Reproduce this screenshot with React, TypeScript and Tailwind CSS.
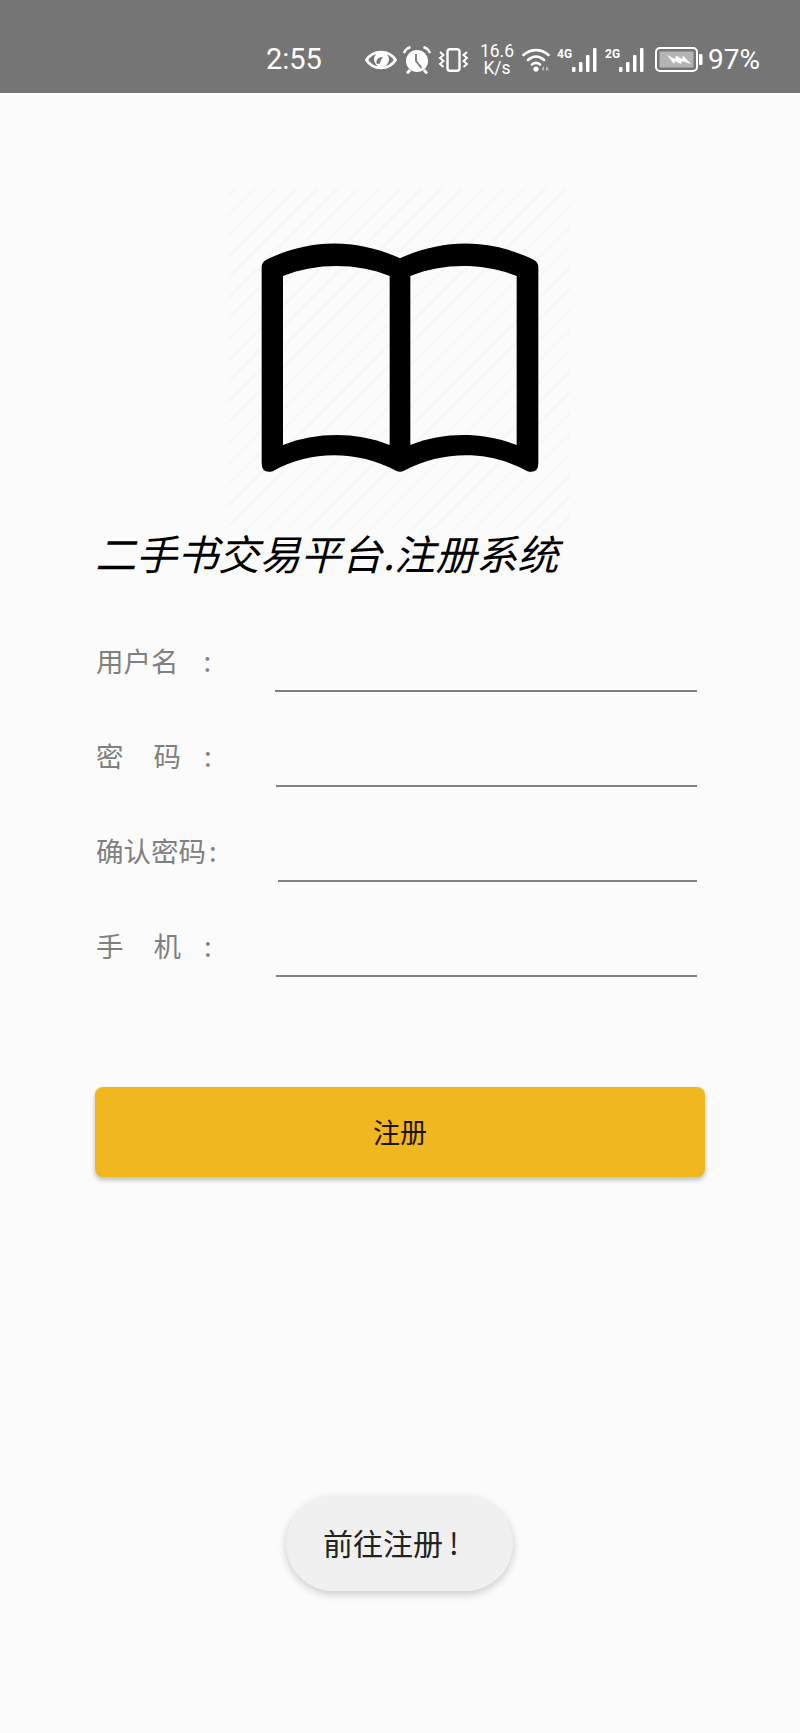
const rows = [
  { parts: [{ text: '用户名', gap: 0 }, { text: ':', gap: 25 }], labelWidth: 179 },
  { parts: [{ text: '密', gap: 0 }, { text: '码', gap: 30 }, { text: ':', gap: 23 }], labelWidth: 180 },
  { parts: [{ text: '确认密码', gap: 0 }, { text: ':', gap: 3 }], labelWidth: 182 },
  { parts: [{ text: '手', gap: 0 }, { text: '机', gap: 30 }, { text: ':', gap: 23 }], labelWidth: 180 },
];

function EyeIcon() {
  return (
    <svg width="32" height="24" viewBox="0 0 32 24" className="shrink-0">
      <path d="M1.500 12C8 1.500 24 1.500 30.500 12C24 22.500 8 22.500 1.500 12Z" fill="none" stroke="#fff" strokeWidth="2.800" strokeLinejoin="round" />
      <circle cx="16.500" cy="11.500" r="7.500" fill="#fff" />
      <path d="M11.500 15.500C11 11.500 14 8.500 18 9.500C16 11 15.500 13.500 14.500 16Z" fill="#757575" />
    </svg>
  );
}

function AlarmIcon() {
  return (
    <svg width="28" height="28" viewBox="0 0 28 28" className="shrink-0">
      <circle cx="14" cy="15" r="11" fill="#fff" />
      <path d="M13 8V15L18.500 22" fill="none" stroke="#757575" strokeWidth="1.800" />
      <path d="M1 7C2 4 4.500 2 7.500 1M27 7C26 4 23.500 2 20.500 1" fill="none" stroke="#fff" strokeWidth="2.400" />
      <path d="M4 27.500L7 24M24 27.500L21 24" fill="none" stroke="#fff" strokeWidth="2.800" />
    </svg>
  );
}

function VibrateIcon() {
  return (
    <svg width="31" height="24" viewBox="0 0 31 24" className="shrink-0">
      <rect x="9.500" y="1.200" width="12" height="21.600" rx="2.500" fill="none" stroke="#fff" strokeWidth="2.400" />
      <path d="M2 4L5.500 7L2 10L5.500 13L2 16L5.500 19M29 4L25.500 7L29 10L25.500 13L29 16L25.500 19" fill="none" stroke="#fff" strokeWidth="2" />
    </svg>
  );
}

function WifiIcon() {
  return (
    <svg width="30" height="25" viewBox="0 0 30 25" className="shrink-0">
      <path d="M1.500 8C9 1.500 19 1.500 26.500 8M6 13C11 8.500 17 8.500 22 13M10 17.500C12.500 15.500 15.500 15.500 18 17.500" fill="none" stroke="#fff" strokeWidth="2.600" strokeLinecap="round" />
      <circle cx="14" cy="22" r="2.600" fill="#fff" />
      <path d="M22 19V24L19.500 22ZM24 19V24L27 22Z" fill="#b8b8b8" />
    </svg>
  );
}

function SignalBars() {
  return (
    <svg width="26" height="24" viewBox="0 0 26 24" className="shrink-0">
      <rect x="0" y="19" width="3.500" height="5" rx="1" fill="#fff" />
      <rect x="7" y="14" width="3.500" height="10" rx="1" fill="#fff" />
      <rect x="14" y="7" width="3.500" height="17" rx="1" fill="#fff" />
      <rect x="21" y="0" width="3.500" height="24" rx="1" fill="#fff" />
    </svg>
  );
}

function BatteryIcon() {
  return (
    <svg width="48" height="25" viewBox="0 0 48 25" className="shrink-0">
      <rect x="1" y="1" width="41" height="23" rx="4" fill="none" stroke="#fff" strokeWidth="2" />
      <rect x="4.500" y="4.500" width="34" height="16" fill="#b4b4b4" />
      <rect x="44" y="7" width="3.500" height="11" rx="1" fill="#fff" />
      <path d="M12 8L20 12L21 8.500L27 12L28 8.500L36 17L27 14L26 17L20 14L19 17Z" fill="#fff" />
    </svg>
  );
}

function BookLogo() {
  return (
    <svg width="360" height="360" viewBox="0 0 1080 1080" className="block">
      <defs>
        <pattern id="stripes" width="44" height="44" patternUnits="userSpaceOnUse" patternTransform="rotate(-45)">
          <rect x="0" y="0" width="1080" height="9" fill="#f7f7f7" />
        </pattern>
      </defs>
      <rect x="25" y="25" width="1025" height="1025" fill="url(#stripes)" />
      <path
        fillRule="evenodd"
        d="M125 262Q125 246 142 238C270 175 410 175 540 235C670 175 810 175 938 238Q955 246 955 262L955 848Q955 882 922 874C810 810 670 810 552 872Q540 878 528 872C410 810 270 810 158 874Q125 882 125 848ZM189 288L189 795C290 755 410 755 509 795L509 288C410 248 290 248 189 288ZM571 288L571 795C670 755 790 755 890 795L890 288C790 248 670 248 571 288Z"
        fill="#000"
      />
    </svg>
  );
}

export default function App() {
  return (
    <div className="relative h-[1733px] w-[800px] overflow-hidden bg-[#fbfbfb] font-['Noto_Sans_CJK_SC',sans-serif]">
      <div className="flex h-[93px] items-center bg-[#757575] pl-[266px] pt-[26px] font-['Roboto',sans-serif] text-white">
        <span className="w-[99px] shrink-0 text-[29px] leading-none">2:55</span>
        <EyeIcon />
        <div className="ml-[6px]"><AlarmIcon /></div>
        <div className="ml-[7px]"><VibrateIcon /></div>
        <div className="ml-[10px] flex w-[36px] shrink-0 flex-col items-center text-[17.500px] leading-[17px]">
          <span>16.6</span>
          <span>K/s</span>
        </div>
        <div className="ml-[7px]"><WifiIcon /></div>
        <div className="ml-[5px] flex items-start">
          <span className="w-[15px] text-[12px] font-bold leading-[12px]">4G</span>
          <SignalBars />
        </div>
        <div className="ml-[7px] flex items-start">
          <span className="w-[14px] text-[12px] font-bold leading-[12px]">2G</span>
          <SignalBars />
        </div>
        <div className="ml-[10px]"><BatteryIcon /></div>
        <span className="ml-[5px] text-[28px] leading-none">97%</span>
      </div>

      <div className="flex justify-center pt-[87px]">
        <div className="-mb-[8px]"><BookLogo /></div>
      </div>

      <div className="ml-[95px] -mt-[10px] text-[41.100px] italic leading-[60px] text-black">二手书交易平台.注册系统</div>

      <div className="mt-[50px] ml-[96px] flex w-[601px] flex-col gap-[35px]">
        {rows.map((row, i) => (
          <div key={i} className="flex h-[60px] items-start">
            <label className="flex h-[58px] shrink-0 items-center text-[27.500px] leading-none text-[#808080]" style={{ width: row.labelWidth }}>
              {row.parts.map((part, j) => (
                <span key={j} style={{ marginLeft: part.gap }}>{part.text}</span>
              ))}
            </label>
            <input className="h-[60px] min-w-0 flex-1 border-b-[2px] border-[#808080] bg-transparent outline-none" />
          </div>
        ))}
      </div>

      <div className="mt-[110px] ml-[95px] flex h-[90px] w-[610px] items-center justify-center rounded-[8px] bg-[#f0b71e] text-[27px] text-[#1c1408] shadow-[0_3px_5px_rgba(0,0,0,0.25)]">
        注册
      </div>

      <div className="absolute left-[286px] top-[1496px] flex h-[95px] w-[227px] items-center rounded-full bg-[#f0f0f1] pb-[3px] pl-[37px] text-[30px] text-[#222] shadow-[0_3px_8px_rgba(0,0,0,0.2)]">
        前往注册<span className="ml-[6px]">!</span>
      </div>
    </div>
  );
}
